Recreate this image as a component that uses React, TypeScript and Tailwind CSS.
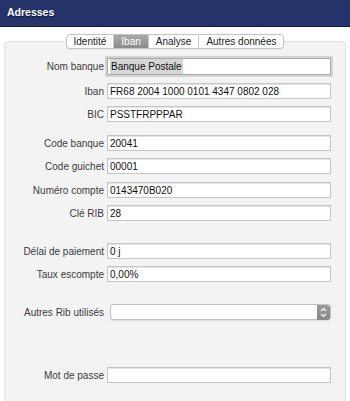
import React from "react";

const font = { fontFamily: '"Liberation Sans", Arial, sans-serif' };

function Field({
  label,
  value,
  className = "",
}: {
  label: string;
  value?: string;
  className?: string;
}) {
  return (
    <div className={`flex h-[16px] items-center ${className}`}>
      <div className="w-[99px] shrink-0 text-right text-[10px] text-[#3c3c3c]">{label}</div>
      <div className="ml-[3px] flex h-[16px] w-[224px] items-center border border-[#c6c6c6] bg-white pl-[2px] text-[10px] text-[#111] shadow-[inset_0_1px_0_#e4e4e4]">
        {value}
      </div>
    </div>
  );
}

function Stepper() {
  return (
    <div className="flex h-[15px] w-[13px] items-center justify-center rounded-r-[3px] bg-gradient-to-b from-[#9b9b9b] to-[#858585]">
      <svg width="7" height="11" viewBox="0 0 7 11" fill="none" stroke="white" strokeWidth="1.2">
        <path d="M1 4 L3.5 1.5 L6 4" />
        <path d="M1 7 L3.5 9.5 L6 7" />
      </svg>
    </div>
  );
}

export default function App() {
  const tabs = ["Identité", "Iban", "Analyse", "Autres données"];

  return (
    <div className="h-[401px] w-[350px] overflow-hidden bg-white" style={font}>
      {/* Header */}
      <div className="flex h-[27px] items-center border-b border-[#111a3c] bg-[#24346a] pl-[7px]">
        <span className="text-[10.5px] font-bold text-white [text-shadow:0_1px_1px_rgba(0,0,0,0.6)]">
          Adresses
        </span>
      </div>

      <div className="px-[4px] pt-[7px]">
        {/* Tabs */}
        <div className="relative z-10 flex justify-center">
          <div className="flex h-[15px] overflow-hidden rounded-[4px] border border-[#c4c4c4] bg-white text-[10px] text-[#222] shadow-[0_1px_0_rgba(0,0,0,0.05)]">
            {tabs.map((t, i) => (
              <div
                key={t}
                className={`flex items-center px-[7px] ${i > 0 ? "border-l border-[#c9c9c9]" : ""} ${
                  t === "Iban" ? "bg-gradient-to-b from-[#a9a9a9] to-[#8c8c8c] text-white" : ""
                }`}
              >
                {t}
              </div>
            ))}
          </div>
        </div>

        {/* Panel */}
        <div className="-mt-[8px] h-[363px] rounded-[4px] border border-[#e2e2e2] bg-[#f3f3f3] pt-[16px]">
          <div className="flex h-[16px] items-center">
            <div className="w-[99px] shrink-0 text-right text-[10px] text-[#3c3c3c]">Nom banque</div>
            <div className="ml-[3px] flex h-[17px] w-[224px] items-center border border-[#a9a9a9] bg-white pl-[2px] text-[10px] text-[#111] shadow-[0_0_0_2px_#d4d4d4]">
              <span className="bg-[#d6d6d6] px-[1px]">Banque Postale</span>
            </div>
          </div>
          <Field label="Iban" value="FR68 2004 1000 0101 4347 0802 028" className="mt-[9px]" />
          <Field label="BIC" value="PSSTFRPPPAR" className="mt-[7px]" />

          <Field label="Code banque" value="20041" className="mt-[13px]" />
          <Field label="Code guichet" value="00001" className="mt-[7px]" />
          <Field label="Numéro compte" value="0143470B020" className="mt-[8px]" />
          <Field label="Clé RIB" value="28" className="mt-[7px]" />

          <Field label="Délai de paiement" value="0 j" className="mt-[22px]" />
          <Field label="Taux escompte" value="0,00%" className="mt-[7px]" />

          <div className="mt-[22px] flex h-[16px] items-center">
            <div className="w-[99px] shrink-0 text-right text-[10px] text-[#3c3c3c]">Autres Rib utilisés</div>
            <div className="ml-[6px] flex h-[16px] w-[221px] items-center justify-between rounded-[3px] border border-[#c0c0c0] bg-white shadow-[0_1px_0_rgba(0,0,0,0.08)]">
              <span />
              <Stepper />
            </div>
          </div>

          <Field label="Mot de passe" className="mt-[47px]" />
        </div>
      </div>
    </div>
  );
}
